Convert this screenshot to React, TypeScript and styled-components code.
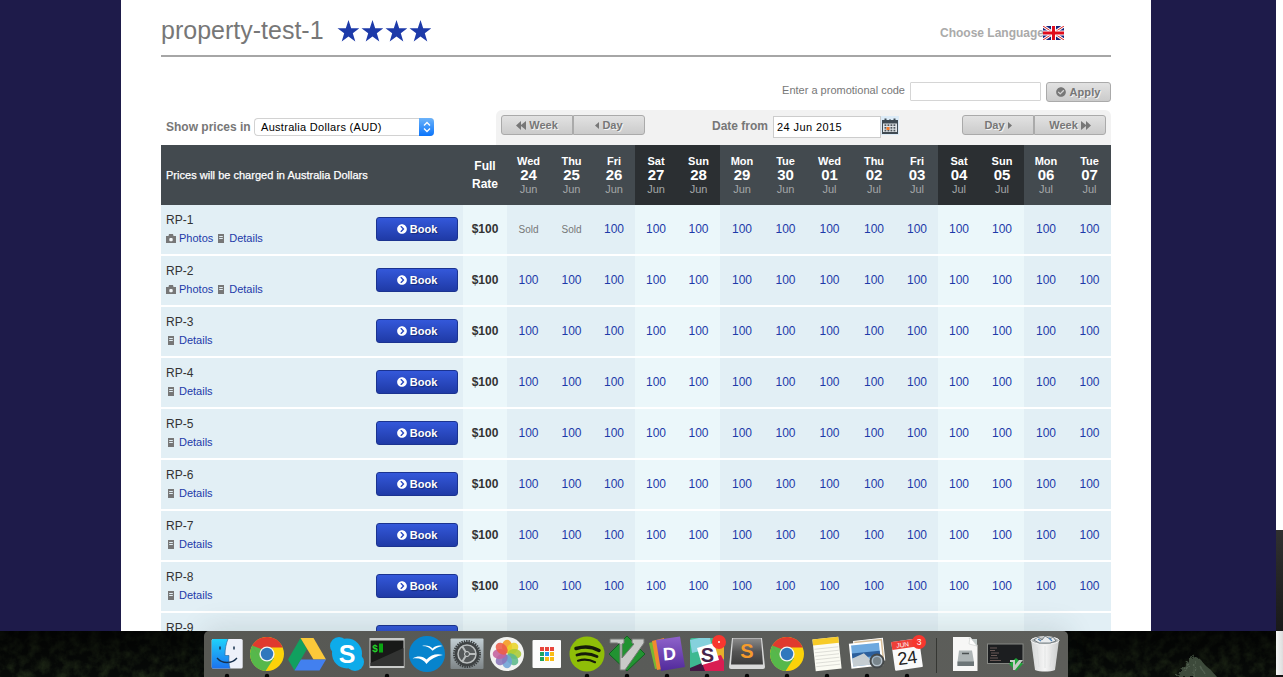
import React from "react";
import styled, { createGlobalStyle, css } from "styled-components";
import { FaCheckCircle, FaChevronCircleRight } from "react-icons/fa";

const GlobalStyle = createGlobalStyle`
  *, *::before, *::after { box-sizing: border-box; }
  body {
    margin: 0;
    overflow: hidden;
    font-family: "Liberation Sans", Arial, Helvetica, sans-serif;
    font-size: 12px;
    color: #333;
  }
`;

const dayColumns = "43px 43px 42px 42px 43px 44px 43px 45px 44px 42px 42px 44px 44px 43px";

const Screen = styled.div`
  display: flex;
  width: 1283px;
  height: 677px;
  overflow: hidden;
  background: #0b100c;
`;

const Workspace = styled.div`
  display: flex;
  flex-direction: column;
  width: 1276px;
`;

const EdgeWindows = styled.div`
  display: grid;
  grid-template-rows: 530px 101px 44px 2px;
  width: 7px;
`;

const EdgePiece = styled.div<{ $bg: string }>`
  background: ${(p) => p.$bg};
`;

const Browser = styled.div`
  display: flex;
  justify-content: flex-start;
  height: 631px;
  padding-left: 121px;
  background: #1e1b4a;
  overflow: hidden;
`;

const Page = styled.main`
  width: 1030px;
  height: 700px;
  padding: 0 40px;
  background: #fff;
`;

const Header = styled.header`
  display: flex;
  align-items: flex-start;
  height: 57px;
  border-bottom: 2px solid #a6a6a6;
`;

const Title = styled.h1`
  width: 176px;
  margin: 0;
  padding-top: 15px;
  font-size: 25px;
  line-height: 30px;
  font-weight: 400;
  color: #777;
  white-space: nowrap;
`;

const Stars = styled.div`
  display: flex;
  gap: 2px;
  padding-top: 20px;
`;

const Language = styled.div`
  display: flex;
  align-items: center;
  margin-left: auto;
  margin-right: 47px;
  padding-top: 26px;
  font-weight: 700;
  line-height: 14px;
  color: #aaa;
  svg { display: block; margin-left: -1px; }
`;

const Promo = styled.div`
  display: flex;
  justify-content: flex-end;
  margin-top: 25px;
  height: 28px;
`;

const PromoLabel = styled.label`
  margin-right: 5px;
  font-size: 11px;
  line-height: 17px;
  color: #777;
`;

const PromoInput = styled.input`
  width: 131px;
  height: 19px;
  margin-right: 5px;
  padding: 0 4px;
  border: 1px solid #d5d5d5;
  border-radius: 1px;
  outline: 0;
`;

const greyFace = css`
  display: flex;
  align-items: center;
  justify-content: center;
  gap: 3px;
  height: 20px;
  padding: 0;
  border: 1px solid #aaa;
  background: linear-gradient(#e2e2e2, #cbcbcb);
  font-family: inherit;
  font-size: 11px;
  font-weight: 700;
  color: #777;
  text-shadow: 1px 1px 0 #f4f4f4;
`;

const ApplyButton = styled.button`
  ${greyFace}
  width: 65px;
  border-radius: 3px;
  letter-spacing: 0.1px;
`;

const Controls = styled.div`
  display: flex;
  justify-content: space-between;
  height: 35px;
`;

const Currency = styled.div`
  display: flex;
  align-items: flex-start;
  padding: 8px 0 0 5px;
`;

const Label = styled.span`
  font-weight: 700;
  line-height: 18px;
  color: #777;
`;

const CurrencyLabel = styled(Label)`
  width: 88px;
`;

const Select = styled.div`
  display: flex;
  justify-content: space-between;
  width: 180px;
  height: 18px;
  padding-left: 6px;
  border: 1px solid #d2d2d2;
  border-right: 0;
  border-radius: 4px;
  background: #fff;
  font-size: 11px;
  line-height: 16px;
  letter-spacing: 0.3px;
  color: #000;
`;

const Stepper = styled.span`
  display: flex;
  align-items: center;
  justify-content: center;
  width: 15px;
  height: 18px;
  margin-top: -1px;
  border-radius: 0 4px 4px 0;
  background: linear-gradient(#6cb3fa, #0a74fb);
`;

const DatePanel = styled.div`
  display: flex;
  align-items: flex-start;
  width: 615px;
  padding: 5px 5px 0;
  border-radius: 6px 6px 0 0;
  background: #f2f2f2;
`;

const ButtonGroup = styled.div`
  display: flex;
`;

const NavButton = styled.button`
  ${greyFace}
  width: 72px;
  &:first-child { border-radius: 3px 0 0 3px; }
  &:last-child { border-radius: 0 3px 3px 0; }
`;

const DateField = styled.div`
  display: flex;
  align-items: flex-start;
  margin: 1px 63px 0 67px;
`;

const DateLabel = styled(Label)`
  width: 61px;
  line-height: 21px;
  white-space: nowrap;
`;

const DateInput = styled.input`
  width: 108px;
  height: 22px;
  padding: 0 3px;
  border: 1px solid #ccc;
  background: #fff;
  font-family: inherit;
  font-size: 11px;
  letter-spacing: 0.4px;
  color: #000;
  outline: 0;
`;

const TableHead = styled.div`
  display: grid;
  grid-template-columns: 302px 44px ${dayColumns};
  height: 60px;
  background: #434a4f;
  color: #fff;
`;

const HeadNote = styled.div`
  padding-left: 5px;
  font-size: 11px;
  line-height: 60px;
  letter-spacing: 0.015px;
  -webkit-text-stroke: 0.25px #fff;
`;

const HeadRate = styled.div`
  padding-top: 12px;
  font-weight: 700;
  line-height: 18px;
  text-align: center;
`;

const HeadDay = styled.div<{ $weekend: boolean }>`
  display: flex;
  flex-direction: column;
  align-items: center;
  padding-top: 10px;
  background: ${(p) => (p.$weekend ? "#2b2f32" : "transparent")};
`;

const DayName = styled.span`
  font-size: 11px;
  font-weight: 700;
  line-height: 13px;
`;

const DayNumber = styled.span`
  font-size: 15px;
  font-weight: 700;
  line-height: 14px;
`;

const DayMonth = styled.span`
  font-size: 11px;
  line-height: 15px;
  color: #a3a6a8;
`;

const Row = styled.div`
  display: grid;
  grid-template-columns: 215px 87px 44px ${dayColumns};
  height: 51px;
  border-bottom: 2px solid #fff;
  background: #e2eff5;
`;

const RoomCell = styled.div`
  padding: 6px 0 0 5px;
`;

const RoomName = styled.div`
  line-height: 18px;
  color: #333;
`;

const Links = styled.div`
  display: flex;
  align-items: center;
  gap: 3px;
  line-height: 18px;
`;

const RoomLink = styled.a`
  display: flex;
  align-items: center;
  gap: 3px;
  font-size: 11px;
  color: #1d3aa9;
`;

const BookButton = styled.button`
  display: flex;
  align-items: center;
  justify-content: center;
  gap: 3px;
  width: 82px;
  height: 24px;
  margin-top: 12px;
  padding: 0;
  border: 1px solid #1b3390;
  border-radius: 3px;
  background: linear-gradient(#3458da, #1f3aa6);
  font-family: inherit;
  font-size: 11px;
  font-weight: 700;
  color: #fff;
  text-shadow: 1px 1px 1px #152a78;
`;

const Cell = styled.div<{ $light?: boolean; $kind?: "rate" | "sold" }>`
  background: ${(p) => (p.$light ? "#ebf7fa" : "transparent")};
  color: ${(p) => (p.$kind === "rate" ? "#333" : p.$kind === "sold" ? "#777" : "#1d3aa9")};
  font-weight: ${(p) => (p.$kind === "rate" ? 700 : 400)};
  font-size: ${(p) => (p.$kind === "sold" ? "10px" : "12px")};
  line-height: 49px;
  text-align: center;
`;

const Desktop = styled.div`
  position: relative;
  display: flex;
  justify-content: flex-start;
  height: 46px;
  padding-left: 204px;
  background: #070a08;
`;

const Forest = styled.svg`
  position: absolute;
  left: 0;
  top: 0;
`;

const Dock = styled.nav`
  position: relative;
  display: flex;
  width: 864px;
  height: 46px;
  padding-left: 3px;
  border-radius: 5px 5px 0 0;
  background: linear-gradient(90deg, #575853, #595b58 50%, #5d5e5a);
  box-shadow: 0 -4px 28px rgba(40, 60, 60, 0.13);
`;

const DockIcon = styled.svg`
  display: block;
  flex: none;
`;

const DockDivider = styled.div`
  width: 1px;
  height: 35px;
  margin: 7px 8px 0 9px;
  background: #353733;
`;

const Star = () => (
  <svg width="22" height="22" viewBox="0 0 22 22">
    <path fill="#1d3aa9" d="M11.500 0l2.700 8.200H22.500l-6.700 5 2.500 8.200-6.800-5-6.800 5 2.500-8.200-6.700-5h8.300z" />
  </svg>
);

const Flag = () => (
  <svg width="21" height="14" viewBox="0 0 21 14">
    <rect width="21" height="14" fill="#1a237b" />
    <path d="M0 0l21 14M21 0L0 14" stroke="#fff" strokeWidth="3" />
    <path d="M0 0l21 14M21 0L0 14" stroke="#d22" strokeWidth="1" />
    <path d="M10.500 0v14M0 7h21" stroke="#fff" strokeWidth="5" />
    <path d="M10.500 0v14M0 7h21" stroke="#e00d1c" strokeWidth="3" />
  </svg>
);

const MirroredSvg = styled.svg<{ $back?: boolean }>`
  transform: ${(p) => (p.$back ? "scaleX(-1)" : "none")};
`;

const Arrow = ({ back, double }: { back?: boolean; double?: boolean }) => (
  <MirroredSvg
    $back={back}
    width={double ? 10 : 4}
    height="9"
    viewBox={double ? "0 0 10 9" : "0 0 4 9"}
  >
    {double ? (
      <path fill="#777" d="M0 0l5 4V0l5 4.500L5 9V5L0 9z" />
    ) : (
      <path fill="#777" d="M0 1l4 3.500L0 8z" />
    )}
  </MirroredSvg>
);

const CalendarGlyph = () => (
  <svg width="18" height="19" viewBox="0 0 18 19">
    <rect width="18" height="19" fill="#dcebf7" />
    <rect x="1" y="4" width="16" height="14" fill="#3f4a52" />
    <path d="M4.500 2.500v3M9 3.500v2M13.500 2.500v3" stroke="#3f4a52" strokeWidth="2" />
    <rect x="2" y="7.500" width="14" height="8.500" fill="#dfe3e6" />
    <g fill="#4d565d">
      {[0, 1, 2].map((r) =>
        [0, 1, 2, 3].map((c) => (
          <rect key={`${r}${c}`} x={3.500 + c * 3} y={8.300 + r * 2.700} width="1.800" height="1.700" />
        ))
      )}
    </g>
    <rect x="5.500" y="11" width="3" height="3" fill="#f17a2c" />
  </svg>
);

const Camera = () => (
  <svg width="10" height="10" viewBox="0 0 10 10">
    <path fill="#777" d="M0 3h2.500L3 1h4l.5 2H10v7H0z" />
    <rect x="3.300" y="5" width="3.400" height="3.200" rx="1" fill="#f3f7f9" />
  </svg>
);

const Sheet = () => (
  <svg width="10" height="10" viewBox="0 0 10 10">
    <rect x="2" y="1" width="6" height="9" fill="#777" />
    <path d="M3.200 3.500h3.600M3.200 5.500h3.600" stroke="#e2eff5" />
  </svg>
);

const Dot = () => <circle cx="20" cy="45" r="2.200" fill="#050505" />;

const Icon = ({ running, children }: { running?: boolean; children: React.ReactNode }) => (
  <DockIcon width="40" height="46" viewBox="0 0 40 46">
    {children}
    {running && <Dot />}
  </DockIcon>
);

const Chrome = () => (
  <Icon running>
    <circle cx="20" cy="23" r="17" fill="#fbd20a" />
    <path d="M20 23L5.300 14.500A17 17 0 0 0 18.500 40L27 27z" fill="#56b84b" />
    <path d="M5.300 14.500A17 17 0 0 1 35.800 16.500H20L13 26z" fill="#e03a2e" />
    <path d="M5.300 14.500L13 27l4-8z" fill="#56b84b" />
    <circle cx="20" cy="23" r="7.600" fill="#f2f5f2" />
    <circle cx="20" cy="23" r="6.200" fill="#2f78bd" />
  </Icon>
);

const petals = ["#f59a1d", "#e8d428", "#a8ca35", "#5cb98a", "#6da3d6", "#8a75b9", "#c4619d", "#ec5b48"];
const gridColors = ["#e8453c", "#e8453c", "#e8453c", "#1da462", "#2196f3", "#f9bc15", "#1da462", "#f9bc15", "#f9bc15"];

const DockItems = () => (
  <>
    <Icon running>
      <rect x="4.700" y="8" width="31" height="29.500" rx="1.500" fill="#eef1fa" />
      <path d="M6.200 8H21c-2 5-3 10-3 16.500h4c-.3 5 0 9 1 13H6.200a1.500 1.500 0 0 1-1.500-1.500V9.500A1.500 1.500 0 0 1 6.200 8z" fill="url(#finder)" />
      <path d="M13 15.500v3M27 15.500v3" stroke="#17304d" strokeWidth="1.500" />
      <path d="M10 27c5 6 15 6 20 0" fill="none" stroke="#17304d" strokeWidth="1.300" />
      <path d="M21 8c-2 5-3 10-3 16.500h4c-.3 5 0 9 1 13" fill="none" stroke="#2c5f93" strokeWidth=".6" />
    </Icon>
    <Chrome />
    <Icon>
      <path d="M13.500 7L1 28.500 7.500 39.500 20 18z" fill="#11a05f" />
      <path d="M13.500 7h13L39 28.500H26.500z" fill="#fbc93a" />
      <path d="M14 28.500h25L32.500 39.500h-25z" fill="#4280ef" />
    </Icon>
    <Icon>
      <circle cx="20" cy="22.500" r="15" fill="#0eabea" />
      <circle cx="12" cy="15" r="9" fill="#0eabea" />
      <circle cx="28" cy="31" r="9" fill="#0eabea" />
      <text x="20" y="31.500" textAnchor="middle" fontSize="25" fontWeight="700" fill="#fff">S</text>
    </Icon>
    <Icon running>
      <rect x="2.500" y="7" width="35" height="30" fill="#c9cbc9" />
      <rect x="3.500" y="9.500" width="33" height="25.500" fill="#181918" />
      <path d="M3.500 32l33-15v18h-33z" fill="#323332" />
      <text x="5" y="21" fontFamily="Liberation Mono, monospace" fontSize="10" fontWeight="700" fill="#23d52a">$</text>
      <rect x="12" y="12.500" width="4" height="9" fill="#0aa512" />
    </Icon>
    <Icon>
      <circle cx="20" cy="23" r="18" fill="#0784cd" />
      <path d="M15 15c4.500-1 8.500 0 10.500 2.500 3-3 6.500-3.500 10-2.500-4 .8-7.500 2.500-10 4.800-2.500-3.300-5.500-4.800-10.500-4.800z" fill="#fff" />
      <path d="M5.500 27.500c5.500-3 10.500-2.300 14 1 4.500-5 10.500-6.500 16.500-4.500-6.500.8-12.500 4-16.500 9-3-4.500-7.500-6.500-14-5.500z" fill="#fff" />
    </Icon>
    <Icon>
      <rect x="3.500" y="7.500" width="33" height="30.500" rx="1" fill="url(#steel)" />
      <circle cx="20" cy="23" r="13" fill="none" stroke="#3a3e3f" strokeWidth="2" strokeDasharray="1.400 1" />
      <circle cx="20" cy="23" r="12.300" fill="#3e4243" />
      <circle cx="20" cy="23" r="9" fill="#55595a" stroke="#b9bdbd" strokeWidth="1.500" />
      <path d="M20 23h9M20 23l-5-8M20 23l-5 8" stroke="#b9bdbd" strokeWidth="2" />
      <circle cx="20" cy="23" r="2.500" fill="#555a5b" stroke="#d0d3d3" />
    </Icon>
    <Icon>
      <circle cx="20" cy="23" r="17" fill="#f2f3f1" />
      {petals.map((c, i) => (
        <ellipse key={c} cx="20" cy="15.500" rx="5" ry="6.800" fill={c} fillOpacity=".88" transform={`rotate(${i * 45} 20 23)`} />
      ))}
    </Icon>
    <Icon>
      <rect x="5.500" y="9" width="28.500" height="28" rx="1" fill="#fcfcfc" />
      {gridColors.map((c, i) => (
        <rect key={i} x={13 + (i % 3) * 5} y={16 + Math.floor(i / 3) * 5} width="4" height="4" fill={c} />
      ))}
    </Icon>
    <Icon running>
      <circle cx="20" cy="23" r="17.500" fill="#8fbe08" />
      <g fill="none" stroke="#161a0a" strokeLinecap="round">
        <path d="M9 17.500c8-2.500 16-2 23 2" strokeWidth="3.500" />
        <path d="M10 24c7-2 14-1.500 20 1.500" strokeWidth="2.800" />
        <path d="M11 29.700c6-1.700 12-1 17 1.500" strokeWidth="2.200" />
      </g>
    </Icon>
    <Icon running>
      <path d="M20 5l18 18-18 17L2 23z" fill="#229332" stroke="#126120" />
      <path d="M3 8h14v4l-2 1v14L27 13l-2-1V8h12v4L18 39h-5V13l-3-1H3z" fill="#c8cac8" stroke="#777a77" />
    </Icon>
    <Icon running>
      <path d="M2 12l11-3 6 27-11 2z" fill="#75b833" />
      <path d="M5 10l12-3 4 30-11 2z" fill="#f18b2e" />
      <path d="M9 9l24-3.500L38 36l-24 4z" fill="url(#dash)" />
      <text x="22.500" y="29" textAnchor="middle" fontSize="18" fontWeight="700" fill="#fff" transform="rotate(-5 22 23)">D</text>
    </Icon>
    <Icon running>
      <rect x="3" y="7" width="34" height="33" rx="2" fill="#3eb991" />
      <path d="M3 9l9-2h11l2 10-20 5z" fill="#85d1dc" />
      <path d="M27 8h10v20l-7 2z" fill="#e6b12b" />
      <path d="M14 29l20-5 3 6v10H17z" fill="#d91d52" />
      <path d="M3 37l12-5 3 8H3z" fill="#421a43" />
      <path d="M10 17l17-5 5 17-17 5z" fill="#fff" />
      <text x="20.500" y="30.500" textAnchor="middle" fontSize="20" fontWeight="700" fill="#46234a">S</text>
      <circle cx="32" cy="11" r="7" fill="#f7372f" />
      <circle cx="32" cy="11" r="1" fill="#fff" />
    </Icon>
    <Icon running>
      <path d="M5 7h30l3 29a2 2 0 0 1-2 2H4a2 2 0 0 1-2-2z" fill="#d8d9d9" />
      <path d="M6 7.500h28l2 26H4z" fill="url(#sublime)" />
      <text x="20" y="27" textAnchor="middle" fontSize="20" fontWeight="700" fill="#f59b2b">S</text>
    </Icon>
    <Chrome />
    <Icon running>
      <g transform="rotate(-6 20 23)">
        <rect x="7" y="7" width="26" height="32" fill="#fbfbf3" />
        <rect x="7" y="7" width="26" height="6" fill="#f7cb28" />
        <path d="M8 17h24M8 20.500h24M8 24h24M8 27.500h24M8 31h24M8 34.500h24" stroke="#d8d8d2" strokeWidth=".8" />
      </g>
    </Icon>
    <Icon running>
      <g transform="rotate(-6 20 23)">
        <rect x="8" y="9" width="29" height="22" fill="#d7bd97" stroke="#fff" />
        <rect x="4" y="12" width="30" height="23" fill="#6ea9df" stroke="#fff" strokeWidth="2" />
        <path d="M5 21h28v5H5z" fill="#2c5f9c" />
        <path d="M5 26l12-4 6 7 10-2v7H5z" fill="#c5cdd2" />
      </g>
      <circle cx="30" cy="30" r="6.500" fill="#a5b4bf" fillOpacity=".8" stroke="#45494b" strokeWidth="2" />
      <circle cx="30" cy="30" r="4" fill="#79858c" />
    </Icon>
    <Icon running>
      <g transform="rotate(-8 20 23)">
        <rect x="6" y="9" width="28" height="29" rx="1" fill="#fafafa" />
        <path d="M6 9h28v8H6z" fill="#ee4038" />
        <text x="17" y="15.500" textAnchor="middle" fontSize="6.500" fill="#fff">JUN</text>
        <text x="19.500" y="33" textAnchor="middle" fontSize="18" letterSpacing="-.5" fill="#222">24</text>
      </g>
      <circle cx="32" cy="11" r="7" fill="#f7372f" />
      <text x="32" y="14" textAnchor="middle" fontSize="8.500" fill="#fff">3</text>
    </Icon>
    <DockDivider />
    <Icon>
      <path d="M8 6h17l7.500 8v26H8z" fill="#f7f7f6" />
      <path d="M23 6.500l9 9V8h-6z" fill="#c2cbca" />
      <path d="M25 6l-1 7 8 2z" fill="#fff" stroke="#cbcecd" strokeWidth=".6" />
      <path d="M14 19.500h13l2 11.500v4H12.500v-4z" fill="#aeb5b6" />
      <path d="M12.500 30.500h16.500v4.500H12.500z" fill="#6c7577" />
      <path d="M17 22.500h7" stroke="#4b5152" strokeWidth="1.500" />
    </Icon>
    <Icon>
      <rect x="2.500" y="13" width="35.500" height="19.500" fill="#1c1e20" stroke="#858783" />
      <path d="M5 17h7M5 19.500h5M6 22h8M6 24.500h6M5 27h8M5 29.500h11" stroke="#7f6864" strokeWidth=".8" />
      <path d="M31 27l7 6-7 7-7-7z" fill="#21a33a" />
      <path d="M25 29h5v5l4-5h4l-8 10h-2v-8h-3z" fill="#c6cbc6" />
    </Icon>
    <Icon>
      <path d="M6 9l28 0-4 30c-5 2-15 2-20 0z" fill="url(#trash)" />
      <ellipse cx="20" cy="9.500" rx="14" ry="3.800" fill="#aeb2b2" stroke="#f3f3f3" />
      <path d="M9 9l4-3 4 3 3-4 5 3 3-2 3 4-6 2H14z" fill="#e9ecee" stroke="#4f5b63" strokeWidth=".7" />
      <path d="M13 8l3 2M24 7l3 3" stroke="#4d83b7" strokeWidth="1.300" />
      <path d="M12 16l2 20M20 15v22M28 16l-3 20" stroke="#dcdede" strokeWidth=".8" />
    </Icon>
  </>
);

const Woodland = () => (
  <Forest width="1276" height="46" viewBox="0 0 1276 46">
    <defs>
      <linearGradient id="finder" x1="0" y1="0" x2="0" y2="1">
        <stop stopColor="#1fd1fb" /><stop offset="1" stopColor="#1c72ee" />
      </linearGradient>
      <linearGradient id="steel" x1="0" y1="0" x2="0" y2="1">
        <stop stopColor="#c2ced3" /><stop offset="1" stopColor="#7e8587" />
      </linearGradient>
      <linearGradient id="dash" x1="0" y1="0" x2="0" y2="1">
        <stop stopColor="#8f63cb" /><stop offset="1" stopColor="#512a9b" />
      </linearGradient>
      <linearGradient id="sublime" x1="0" y1="0" x2="0" y2="1">
        <stop stopColor="#8b8b8b" /><stop offset=".5" stopColor="#555" /><stop offset="1" stopColor="#3c3c3c" />
      </linearGradient>
      <linearGradient id="trash">
        <stop stopColor="#d4d6d6" /><stop offset=".5" stopColor="#f6f6f6" /><stop offset="1" stopColor="#c9cbcb" />
      </linearGradient>
      <filter id="leaves" x="0" y="0" width="100%" height="100%" colorInterpolationFilters="sRGB">
        <feTurbulence type="fractalNoise" baseFrequency=".1" numOctaves="4" seed="4" />
        <feColorMatrix values="0 0 0 0 .12  0 0 0 0 .16  0 0 0 0 .09  2 0 0 0 -.72" />
      </filter>
      <filter id="needles" colorInterpolationFilters="sRGB">
        <feTurbulence type="fractalNoise" baseFrequency=".3" numOctaves="2" result="n" />
        <feDisplacementMap in="SourceGraphic" in2="n" scale="6" />
      </filter>
      <linearGradient id="shade" x1="0" y1="0" x2="0" y2="1">
        <stop stopColor="#000" stopOpacity=".7" /><stop offset="1" stopColor="#000" stopOpacity="0" />
      </linearGradient>
    </defs>
    <rect width="1276" height="46" filter="url(#leaves)" />
    <rect width="1276" height="46" fill="url(#shade)" />
    <path d="M1176 46l6-8 3-4 4-6 5-3 6 3 5 6 5 4 7 8z" fill="#3d4a3b" filter="url(#needles)" />
    <path d="M1184 42l5-9M1194 45l1-15M1205 43l-5-8" stroke="#526050" strokeWidth="1.500" filter="url(#needles)" />
  </Forest>
);

const days: [string, string, string][] = [
  ["Wed", "24", "Jun"], ["Thu", "25", "Jun"], ["Fri", "26", "Jun"], ["Sat", "27", "Jun"],
  ["Sun", "28", "Jun"], ["Mon", "29", "Jun"], ["Tue", "30", "Jun"], ["Wed", "01", "Jul"],
  ["Thu", "02", "Jul"], ["Fri", "03", "Jul"], ["Sat", "04", "Jul"], ["Sun", "05", "Jul"],
  ["Mon", "06", "Jul"], ["Tue", "07", "Jul"],
];
const isWeekend = (name: string) => name === "Sat" || name === "Sun";
const rooms = Array.from({ length: 9 }, (_, i) => ({
  name: `RP-${i + 1}`,
  photos: i < 2,
  soldDays: i === 0 ? 2 : 0,
}));

export default function App() {
  return (
    <Screen>
      <GlobalStyle />
      <Workspace>
        <Browser>
          <Page>
            <Header>
              <Title>property-test-1</Title>
              <Stars><Star /><Star /><Star /><Star /></Stars>
              <Language>Choose Language<Flag /></Language>
            </Header>
            <Promo>
              <PromoLabel htmlFor="promo">Enter a promotional code</PromoLabel>
              <PromoInput id="promo" />
              <ApplyButton><FaCheckCircle size={10} />Apply</ApplyButton>
            </Promo>
            <Controls>
              <Currency>
                <CurrencyLabel>Show prices in</CurrencyLabel>
                <Select>
                  Australia Dollars (AUD)
                  <Stepper>
                    <svg width="8" height="12" viewBox="0 0 8 12" fill="none" stroke="#fff" strokeWidth="1.300">
                      <path d="M1 4.500l3-3 3 3M1 7.500l3 3 3-3" />
                    </svg>
                  </Stepper>
                </Select>
              </Currency>
              <DatePanel>
                <ButtonGroup>
                  <NavButton><Arrow back double />Week</NavButton>
                  <NavButton><Arrow back />Day</NavButton>
                </ButtonGroup>
                <DateField>
                  <DateLabel>Date from</DateLabel>
                  <DateInput defaultValue="24 Jun 2015" />
                  <CalendarGlyph />
                </DateField>
                <ButtonGroup>
                  <NavButton>Day<Arrow /></NavButton>
                  <NavButton>Week<Arrow double /></NavButton>
                </ButtonGroup>
              </DatePanel>
            </Controls>
            <TableHead>
              <HeadNote>Prices will be charged in Australia Dollars</HeadNote>
              <HeadRate>Full<br />Rate</HeadRate>
              {days.map(([name, num, month]) => (
                <HeadDay key={month + num} $weekend={isWeekend(name)}>
                  <DayName>{name}</DayName>
                  <DayNumber>{num}</DayNumber>
                  <DayMonth>{month}</DayMonth>
                </HeadDay>
              ))}
            </TableHead>
            {rooms.map((room) => (
              <Row key={room.name}>
                <RoomCell>
                  <RoomName>{room.name}</RoomName>
                  <Links>
                    {room.photos && <RoomLink><Camera />Photos</RoomLink>}
                    <RoomLink><Sheet />Details</RoomLink>
                  </Links>
                </RoomCell>
                <div>
                  <BookButton><FaChevronCircleRight size={10} />Book</BookButton>
                </div>
                <Cell $light $kind="rate">$100</Cell>
                {days.map(([name, num, month], i) => {
                  const sold = i < room.soldDays;
                  return (
                    <Cell key={month + num} $light={isWeekend(name)} $kind={sold ? "sold" : undefined}>
                      {sold ? "Sold" : "100"}
                    </Cell>
                  );
                })}
              </Row>
            ))}
          </Page>
        </Browser>
        <Desktop>
          <Woodland />
          <Dock><DockItems /></Dock>
        </Desktop>
      </Workspace>
      <EdgeWindows>
        <EdgePiece $bg="#fff" />
        <EdgePiece $bg="linear-gradient(#303030, #191919)" />
        <EdgePiece $bg="linear-gradient(90deg, #f6f6f6, #dcdcdc)" />
        <EdgePiece $bg="#111" />
      </EdgeWindows>
    </Screen>
  );
}
